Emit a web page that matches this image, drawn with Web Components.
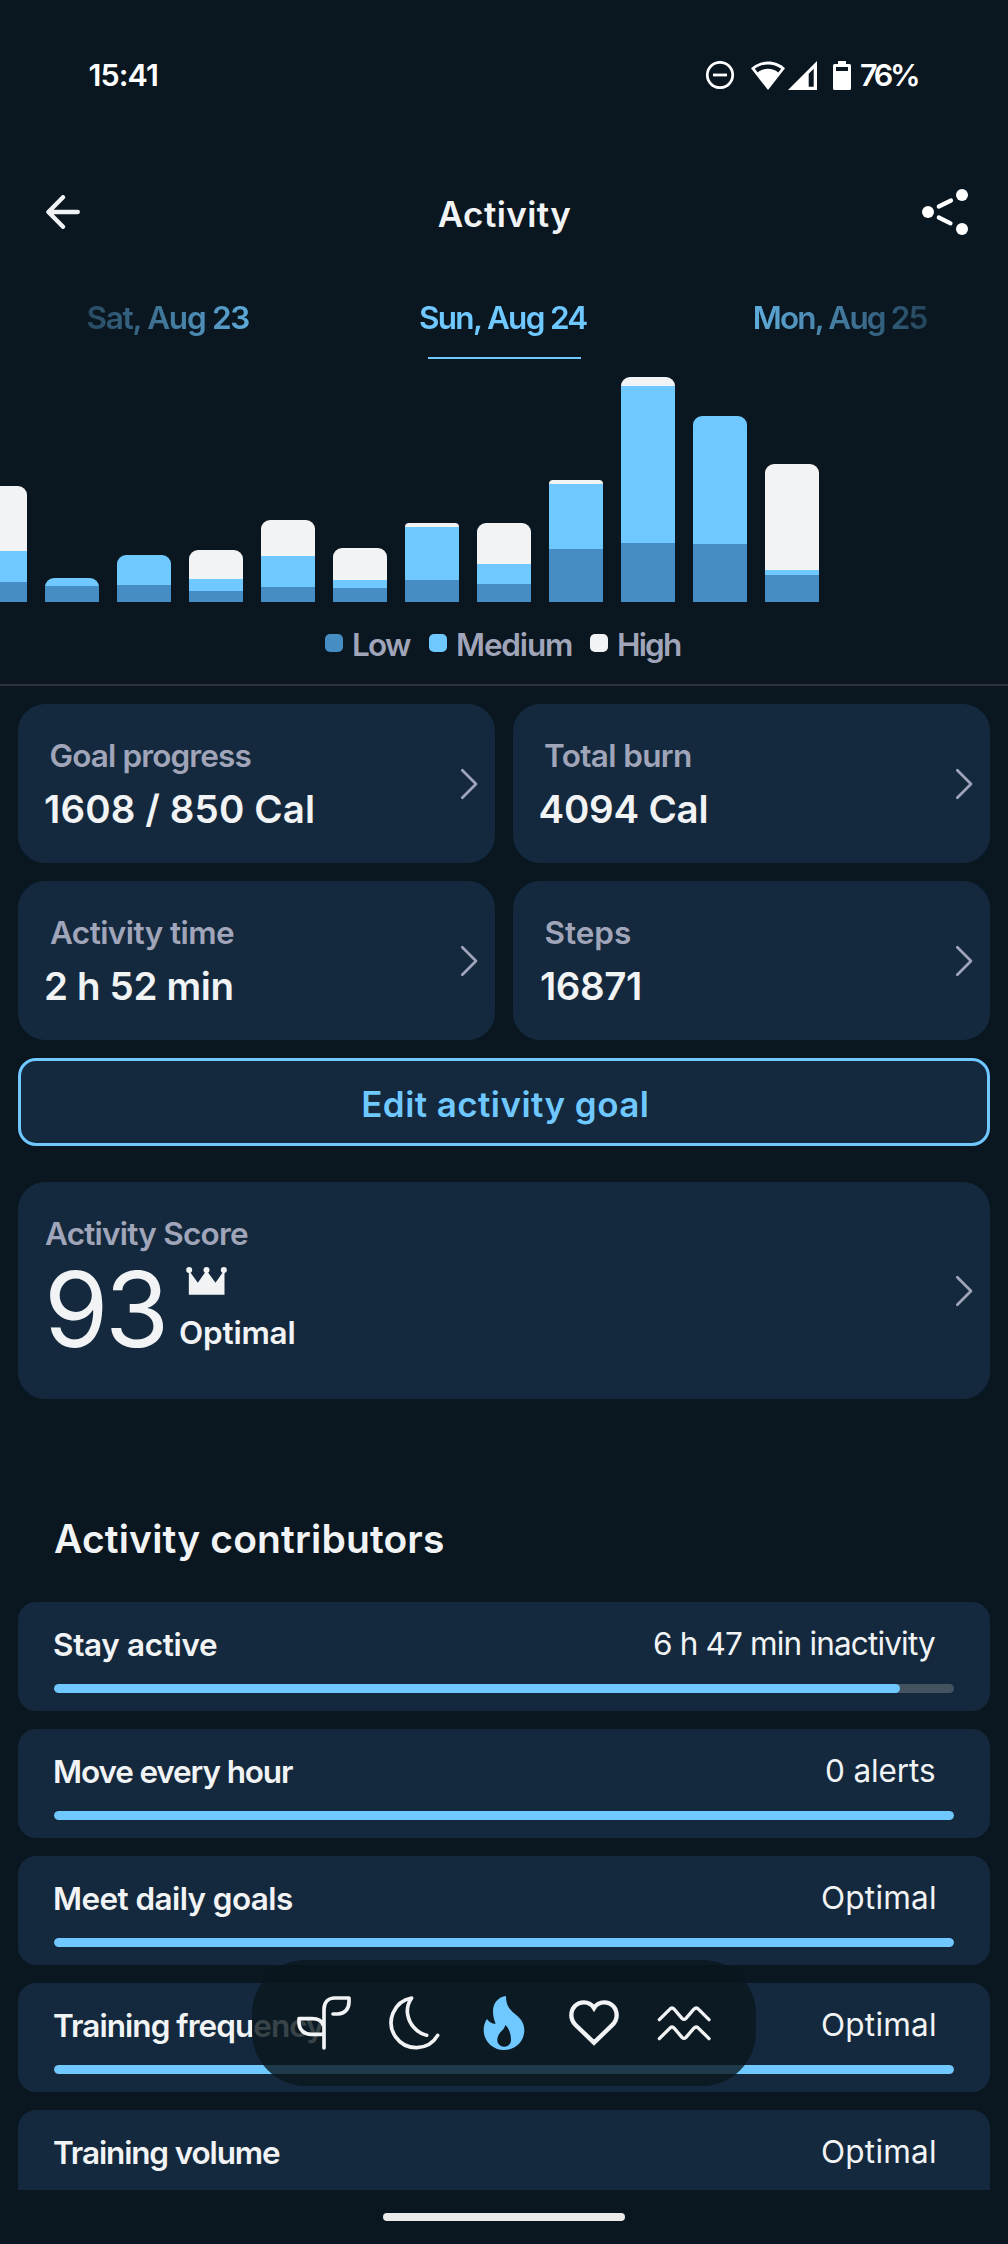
<!DOCTYPE html>
<html lang="en">
<head>
<meta charset="utf-8">
<title>Activity</title>
<style>
html,body{margin:0;padding:0;background:#0a1620}
body{font-family:Inter,"Liberation Sans",sans-serif;color:#f1f3f5;--card:#14293d;--accent:#6fc8ff;--low:#458dc3;--muted:#a0a5b9}
</style>
</head>
<body>
<activity-screen></activity-screen>
<script>
const define = (name, html, setup) => {
  const t = document.createElement('template');
  t.innerHTML = html;
  customElements.define(name, class extends HTMLElement {
    connectedCallback() {
      if (this.shadowRoot) return;
      this.attachShadow({mode: 'open'}).append(t.content.cloneNode(true));
      if (setup) setup(this, this.shadowRoot);
    }
  });
};

/* One line of text, tracked so that its ink spans the given width. */
const ctx = document.createElement('canvas').getContext('2d');
define('ui-text', `<style>
:host{display:block;flex:none;white-space:pre;line-height:40px}
span{display:block;width:max-content}
</style><span><slot></slot></span>`, (el, root) => {
  const size = +el.getAttribute('size') || 31.5, weight = el.getAttribute('weight') || 600;
  const w = +el.getAttribute('w'), text = el.textContent, span = root.querySelector('span');
  ctx.font = `${weight} ${size}px Inter, "Liberation Sans", sans-serif`;
  const m = ctx.measureText(text);
  const ink = m.actualBoundingBoxLeft + m.actualBoundingBoxRight;
  el.style.width = w + 'px';
  span.style.fontSize = size + 'px';
  span.style.fontWeight = weight;
  span.style.letterSpacing = ((w - ink) / (text.length - 1)).toFixed(3) + 'px';
  span.style.marginLeft = m.actualBoundingBoxLeft.toFixed(2) + 'px';
});

define('status-bar', `<style>
:host{display:flex;align-items:center;height:150px;padding:0 90px 0 89.5px;box-sizing:border-box;color:#fff}
svg{display:block;flex:none}
.sp{flex:1}
</style>
<ui-text size="30.5" w="67.5">15:41</ui-text><div class="sp"></div>
<svg width="28" height="28" viewBox="0 0 28 28" fill="none" stroke="#fff"><circle cx="14" cy="14" r="12.7" stroke-width="2.7"/><path d="M7 14H21" stroke-width="2.8"/></svg>
<svg style="margin-left:17px" width="34" height="29" viewBox="0 0 34 29"><path d="M17 .6C10.600 .6 4.600 3 0 7.300L17 29L34 7.300C29.400 3 23.400 .6 17 .6Z" fill="#fff"/><path d="M3.800 7.800C11.500 1.900 22.500 1.900 30.200 7.800L27.300 11.500C21.400 6.600 12.600 6.600 6.700 11.500Z" fill="#0a1620"/></svg>
<svg style="margin-left:3px" width="29" height="29" viewBox="0 0 29 29"><path d="M29 0V29H0ZM25.700 7.700L20.700 12.700V25.700H25.700Z" fill="#fff" fill-rule="evenodd"/></svg>
<svg style="margin-left:16px" width="18" height="29" viewBox="0 0 18 29"><path d="M5 0H13V3H16.500Q18 3 18 4.500V27.500Q18 29 16.500 29H1.500Q0 29 0 27.500V4.500Q0 3 1.500 3H5ZM3 6V10H15V6Z" fill="#fff" fill-rule="evenodd"/></svg>
<ui-text style="margin-left:10px" size="30.5" w="57">76%</ui-text>`);

define('app-header', `<style>
:host{display:grid;grid-template-columns:1fr auto 1fr;align-items:center;height:124px;padding:0 40px 0 46px;box-sizing:border-box}
svg{display:block}
ui-text{padding-top:4px;margin-left:-6px}
.r{justify-self:end}
</style>
<svg width="34" height="34" viewBox="0 0 34 34" fill="none" stroke="#f1f3f5" stroke-width="4.300" stroke-linecap="round" stroke-linejoin="round"><path d="M17 2.200L2.400 17L17 31.800M3 17H31.800"/></svg>
<ui-text size="35" weight="600" w="132.500">Activity</ui-text>
<svg class="r" width="46" height="46" viewBox="0 0 46 46" fill="#fff" stroke="#fff"><g stroke="none"><circle cx="6" cy="23" r="6"/><circle cx="40" cy="6" r="6"/><circle cx="40" cy="40" r="6"/></g><path d="M16.800 17.500L29 11.500M16.800 28.500L28.500 34.300" stroke-width="4.200" stroke-linecap="round"/></svg>`);

define('day-tabs', `<style>
:host{display:grid;grid-template-columns:repeat(3,1fr);height:85px;color:var(--accent);-webkit-mask:linear-gradient(90deg,transparent,#000 300px,#000 708px,transparent);mask:linear-gradient(90deg,transparent,#000 300px,#000 708px,transparent)}
div{display:flex;flex-direction:column;align-items:center;justify-content:space-between;padding-top:24px}
i{display:block;width:153px;height:2px;background:var(--accent)}
</style>
<div><ui-text w="162.500" style="margin-left:1.500px">Sat, Aug 23</ui-text></div>
<div><ui-text w="168">Sun, Aug 24</ui-text><i></i></div>
<div><ui-text w="173.500" style="margin-left:3px">Mon, Aug 25</ui-text></div>`);

define('stack-bar', `<style>
:host{display:flex;flex-direction:column;flex:none;width:54px;border-radius:9px 9px 0 0;overflow:hidden}
.high{background:#f1f3f5}.medium{background:var(--accent)}.low{background:var(--low)}
</style><div class="high"></div><div class="medium"></div><div class="low"></div>`, (el, root) => {
  const v = el.getAttribute('values').split(' ');
  [...root.querySelectorAll('div')].forEach((d, i) => d.style.height = v[i] + 'px');
  if (v[0] === '4') el.style.borderRadius = '4px 4px 0 0';
});

define('activity-chart', `<style>
:host{display:flex;align-items:flex-end;gap:18px;height:243px;overflow:hidden}
stack-bar:first-of-type{margin-left:-27px}
</style>`, (el, root) => {
  for (const v of ['65 31 20', '0 8 16.3', '0 30 17', '29 12 11', '36 31 15', '31.7 8 14', '4 53 22', '41 20 18', '4 65 53', '9 157 59', '0 127.7 58', '106 5 27']) {
    const b = document.createElement('stack-bar');
    b.setAttribute('values', v);
    root.append(b);
  }
});

define('chart-legend', `<style>
:host{display:flex;height:82px;padding:0 0 0 325px;box-sizing:border-box;color:var(--muted)}
div{display:flex;gap:11px;margin-right:18px;height:84px;align-items:center}
i{width:18px;height:18px;border-radius:5px;margin-bottom:2px}
ui-text{margin-top:2px}
</style>
<div><i style="background:var(--low)"></i><ui-text w="57">Low</ui-text></div>
<div><i style="background:var(--accent)"></i><ui-text w="114">Medium</ui-text></div>
<div><i style="background:#f1f3f5"></i><ui-text w="62">High</ui-text></div>`);

define('chevron-icon', `<style>:host{display:block;width:18px;height:32px}svg{display:block}</style>
<svg width="18" height="32" viewBox="0 0 18 32" fill="none" stroke="#a0a5b9" stroke-width="2.700" stroke-linecap="round" stroke-linejoin="round"><path d="M2.300 2.300L16 16L2.300 29.700"/></svg>`);

define('metric-card', `<style>
:host{display:flex;align-items:center;justify-content:space-between;height:159px;border-radius:27px;background:var(--card);padding-right:17px;box-sizing:border-box}
.t{align-self:flex-start;padding-top:32px;display:flex;flex-direction:column;gap:8.500px}
slot[name=label]{color:var(--muted);display:block}
slot[name=value]{display:block}
::slotted([slot=value]){line-height:48px}
</style>
<div class="t"><slot name="label"></slot><slot name="value"></slot></div><chevron-icon></chevron-icon>`);

define('goal-button', `<style>
:host{display:flex;align-items:center;justify-content:center;height:88px;box-sizing:border-box;border:3px solid var(--accent);border-radius:18px;background:var(--card);color:var(--accent)}
ui-text{padding-top:3px;margin-left:2px}
</style><ui-text size="35" weight="600" w="283.500">Edit activity goal</ui-text>`);

define('score-card', `<style>
:host{display:flex;align-items:center;justify-content:space-between;height:217px;border-radius:27px;background:var(--card);padding:0 17px 0 27px;box-sizing:border-box}
.t{align-self:flex-start;padding-top:32px}
.label{color:var(--muted)}
.row{display:flex}
.num{margin:1.500px 16px 0 5px;line-height:106px}
.side{display:flex;flex-direction:column;padding-top:13px}
svg{display:block;margin-left:5.500px}
.side ui-text{margin-top:17.700px}
</style>
<div class="t"><ui-text class="label" w="203">Activity Score</ui-text>
<div class="row"><ui-text class="num" size="104" weight="400" w="114">93</ui-text>
<div class="side"><svg width="41" height="28" viewBox="0 0 122 84" fill="#f1f3f5"><circle cx="9" cy="9" r="9"/><circle cx="61" cy="9" r="9"/><circle cx="113" cy="9" r="9"/><path d="M8 83V14H11L35 47L58 14H64L88 47L111 14H115V83Z"/></svg>
<ui-text weight="600" w="114.500">Optimal</ui-text></div></div></div>
<chevron-icon></chevron-icon>`);

define('contributor-row', `<style>
:host{display:block;height:109px;border-radius:18px;background:var(--card);padding:23px 36px 0;box-sizing:border-box}
.top{display:flex;justify-content:space-between;padding-right:19px;height:59px}
slot{display:block}
.track{height:9px;border-radius:4.500px;background:#445360;overflow:hidden}
.fill{height:9px;border-radius:4.500px;background:var(--accent)}
::slotted([slot=value]){margin-top:-1px}
</style>
<div class="top"><slot name="label"></slot><slot name="value"></slot></div>
<div class="track"><div class="fill"></div></div>`, (el, root) => {
  root.querySelector('.fill').style.width = (el.getAttribute('progress') || 100) + '%';
});

define('bottom-nav', `<style>
:host{display:flex;align-items:center;width:504px;height:126px;border-radius:54px;background:rgba(10,22,29,.8);padding:0 27px;box-sizing:border-box}
div{flex:1;display:flex;justify-content:center}
svg{display:block;width:60px;height:60px;fill:none;stroke:#f1f3f5;stroke-width:11;stroke-linecap:round;stroke-linejoin:round}
</style>
<div><svg viewBox="0 0 180 180"><path d="M90 165V50C90 28 103 15 122 15H165V26C165 48 152 63 132 63H117M88 97C84 84 72 77 54 77H15V88C15 110 30 124 52 124H90"/></svg></div>
<div><svg viewBox="0 0 180 180"><path d="M161 127A75 75 0 1 1 83 15C71 32 68 47 71 64C76 95 99 120 128 127"/></svg></div>
<div><svg viewBox="0 0 180 180"><path style="fill:var(--accent);stroke:none" fill-rule="evenodd" d="M96 9C76 11 57 27 57 55C57 70 60 80 65 92C56 93 47 89 39 78C32 88 29 99 29 111C29 146 57 171 90 171C124 171 151 146 151 111C151 90 140 76 122 62C107 49 96 38 96 9ZM94 96C91 113 70 118 70 141C70 153 79 161 90 161C102 161 111 153 111 141C111 123 105 106 94 96Z"/></svg></div>
<div><svg viewBox="0 0 180 180"><path style="stroke-width:13;stroke-linejoin:miter" d="M90 45C82 32 73 28 60 28C38 28 22 45 22 67C22 79 26 87 34 95L90 149L146 95C154 87 158 79 158 67C158 45 142 28 120 28C107 28 98 32 90 45Z"/></svg></div>
<div><svg viewBox="0 0 180 180"><path style="stroke-width:10" d="M16 80L47 49Q54 41 61 49L84 76Q90 82 96 76L119 49Q127 41 134 49L165 80M16 137L47 106Q54 98 61 106L84 133Q90 139 96 133L119 106Q127 98 134 106L165 137"/></svg></div>`);

define('activity-screen', `<style>
:host{display:flex;flex-direction:column;position:relative;width:1008px;height:2244px;overflow:hidden;background:#0a1620}
main{height:2190px;overflow:hidden;flex:none}
hr{margin:0;border:0;height:2px;background:#2f333c}
.content{padding:18px;display:flex;flex-direction:column;gap:18px}
.grid{display:grid;grid-template-columns:1fr 1fr;gap:18px}
score-card{margin-top:18px}
h2{margin:98px 0 21px;padding-left:36px;font-weight:inherit;font-size:39px;height:48px}
h2 ui-text{line-height:48px}
footer{height:54px;display:flex;align-items:center;justify-content:center}
footer i{width:242px;height:8px;border-radius:4px;background:#ebebeb}
bottom-nav{position:absolute;left:252px;bottom:158px}
</style>
<main>
<status-bar></status-bar>
<app-header></app-header>
<day-tabs></day-tabs>
<activity-chart></activity-chart>
<chart-legend></chart-legend>
<hr>
<div class="content">
<div class="grid">
<metric-card><ui-text slot="label" w="200" style="margin-left:32.500px">Goal progress</ui-text><ui-text slot="value" size="38.500" weight="600" w="268" style="margin-left:27px">1608 / 850 Cal</ui-text></metric-card>
<metric-card><ui-text slot="label" w="146" style="margin-left:32px">Total burn</ui-text><ui-text slot="value" size="38.500" weight="600" w="166" style="margin-left:27.500px">4094 Cal</ui-text></metric-card>
<metric-card><ui-text slot="label" w="184" style="margin-left:32px">Activity time</ui-text><ui-text slot="value" size="38.500" weight="600" w="185.500" style="margin-left:28px">2 h 52 min</ui-text></metric-card>
<metric-card><ui-text slot="label" w="84.500" style="margin-left:32.500px">Steps</ui-text><ui-text slot="value" size="38.500" weight="600" w="99" style="margin-left:28px">16871</ui-text></metric-card>
</div>
<goal-button></goal-button>
<score-card></score-card>
<h2><ui-text size="39" weight="600" w="389">Activity contributors</ui-text></h2>
<contributor-row progress="94"><ui-text slot="label" weight="600" w="163">Stay active</ui-text><ui-text slot="value" weight="400" w="281">6 h 47 min inactivity</ui-text></contributor-row>
<contributor-row><ui-text slot="label" weight="600" w="238" style="margin-left:1px">Move every hour</ui-text><ui-text slot="value" weight="400" w="109">0 alerts</ui-text></contributor-row>
<contributor-row><ui-text slot="label" weight="600" w="237" style="margin-left:1px">Meet daily goals</ui-text><ui-text slot="value" weight="400" w="113">Optimal</ui-text></contributor-row>
<contributor-row><ui-text slot="label" weight="600" w="270">Training frequency</ui-text><ui-text slot="value" weight="400" w="113">Optimal</ui-text></contributor-row>
<contributor-row><ui-text slot="label" weight="600" w="226">Training volume</ui-text><ui-text slot="value" weight="400" w="113">Optimal</ui-text></contributor-row>
</div>
</main>
<footer><i></i></footer>
<bottom-nav></bottom-nav>`);
</script>
</body>
</html>
